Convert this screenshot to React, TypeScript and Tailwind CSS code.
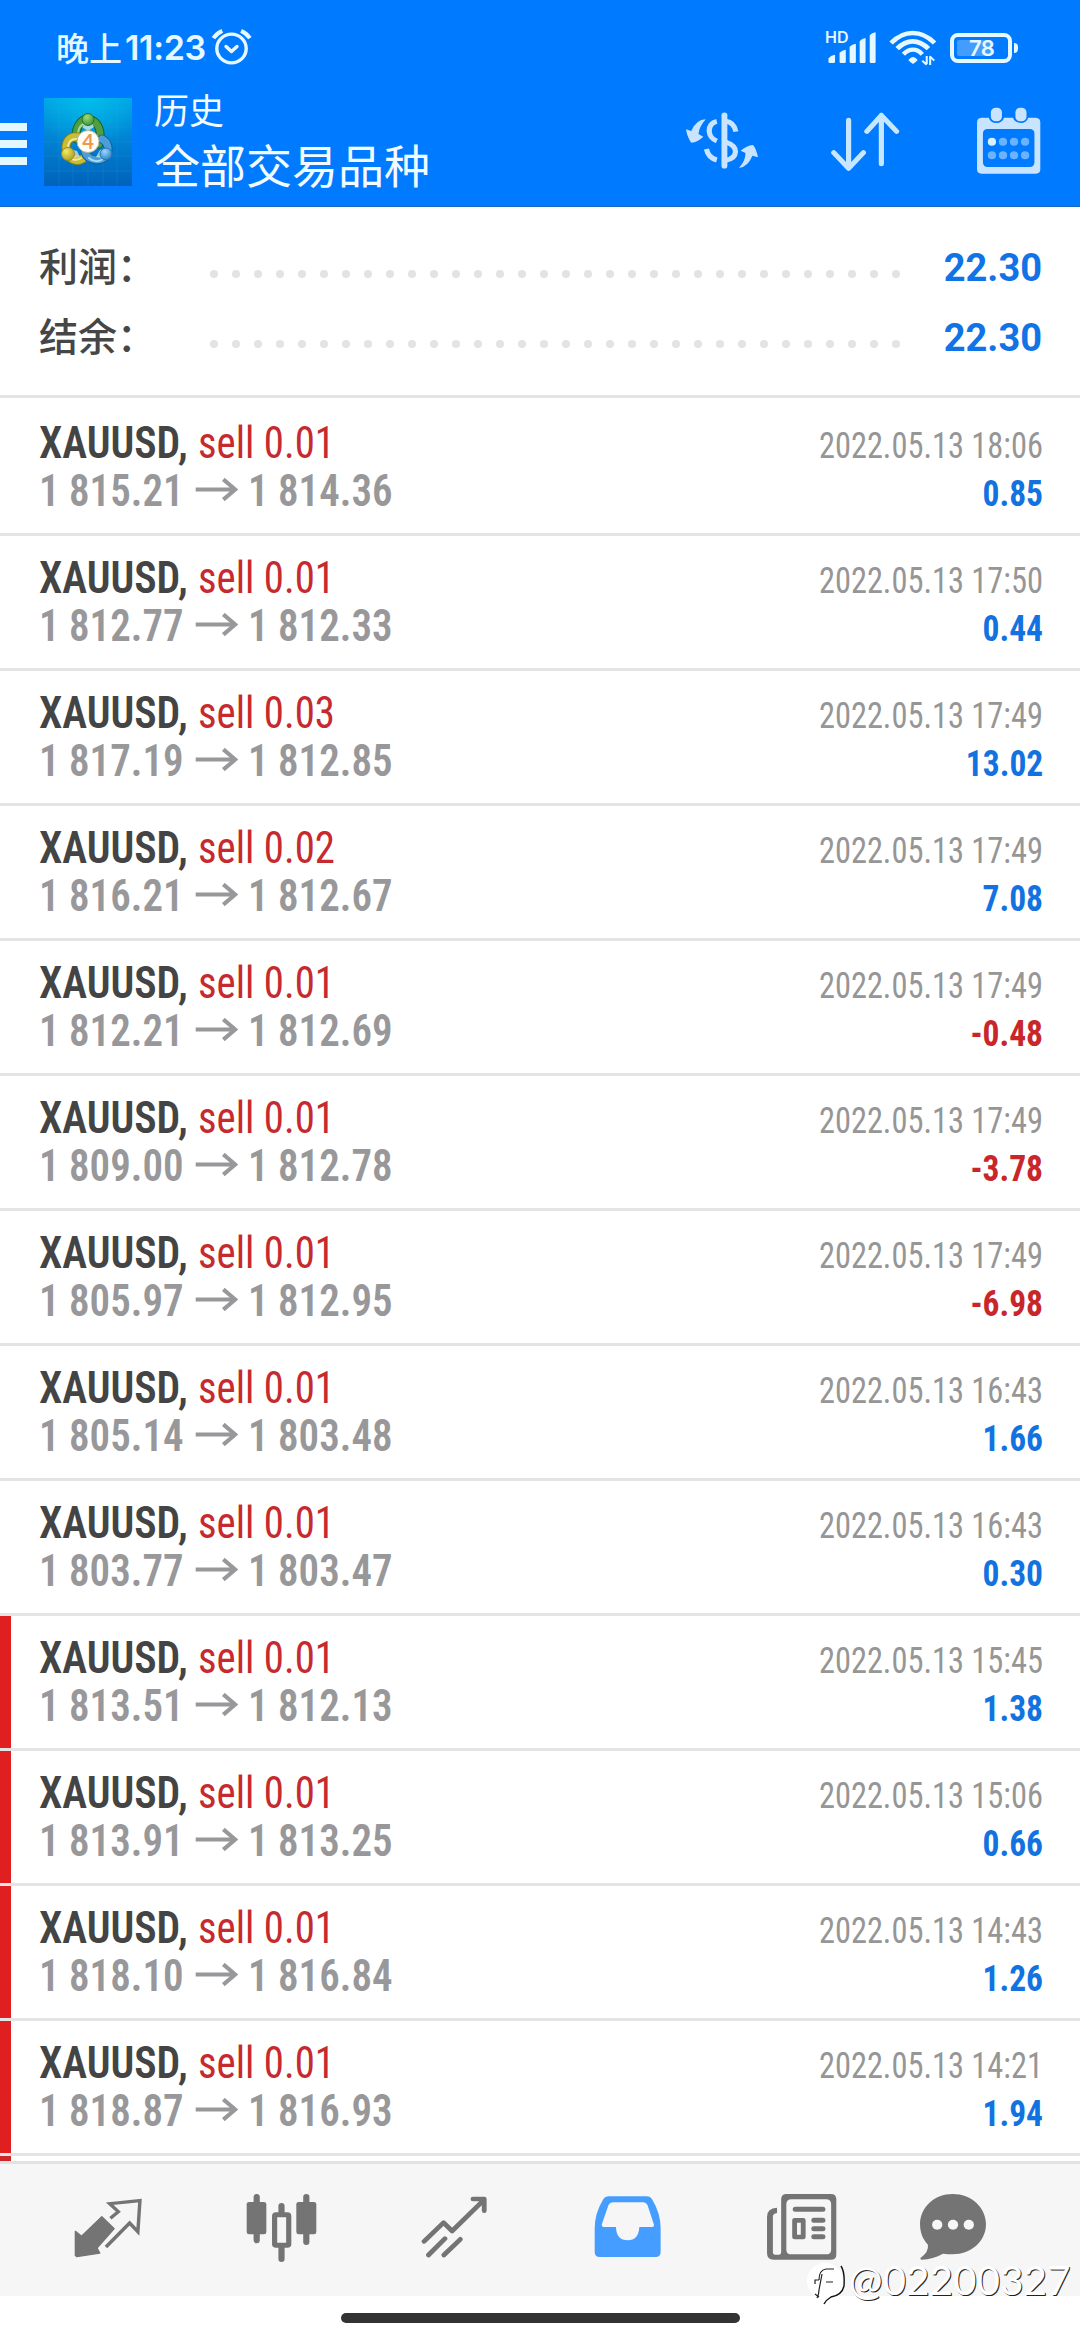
import type { ReactNode } from "react";

type Trade = {
  lot: string;
  from: string;
  to: string;
  time: string;
  profit: string;
  marked?: boolean;
};

const trades: Trade[] = [
  { lot: "0.01", from: "1 815.21", to: "1 814.36", time: "18:06", profit: "0.85" },
  { lot: "0.01", from: "1 812.77", to: "1 812.33", time: "17:50", profit: "0.44" },
  { lot: "0.03", from: "1 817.19", to: "1 812.85", time: "17:49", profit: "13.02" },
  { lot: "0.02", from: "1 816.21", to: "1 812.67", time: "17:49", profit: "7.08" },
  { lot: "0.01", from: "1 812.21", to: "1 812.69", time: "17:49", profit: "-0.48" },
  { lot: "0.01", from: "1 809.00", to: "1 812.78", time: "17:49", profit: "-3.78" },
  { lot: "0.01", from: "1 805.97", to: "1 812.95", time: "17:49", profit: "-6.98" },
  { lot: "0.01", from: "1 805.14", to: "1 803.48", time: "16:43", profit: "1.66" },
  { lot: "0.01", from: "1 803.77", to: "1 803.47", time: "16:43", profit: "0.30" },
  { lot: "0.01", from: "1 813.51", to: "1 812.13", time: "15:45", profit: "1.38", marked: true },
  { lot: "0.01", from: "1 813.91", to: "1 813.25", time: "15:06", profit: "0.66", marked: true },
  { lot: "0.01", from: "1 818.10", to: "1 816.84", time: "14:43", profit: "1.26", marked: true },
  { lot: "0.01", from: "1 818.87", to: "1 816.93", time: "14:21", profit: "1.94", marked: true },
];

function Glyph({ box, className, children }: { box: string; className: string; children: ReactNode }) {
  return (
    <svg viewBox={box} preserveAspectRatio="none" className={className} fill="none" strokeLinecap="round" strokeLinejoin="round">
      {children}
    </svg>
  );
}

function StatusBar() {
  return (
    <div className="flex h-[95px] items-center pl-[56px] text-[#e6f8ff]">
      <span className="w-[69px] font-['Noto_Sans_CJK_SC',sans-serif] text-[33px] font-medium leading-[93px]">晚上</span>
      <span className="w-[86px] font-[Inter,sans-serif] text-[34px] font-semibold leading-[95px] tracking-[-0.3px]">11:23</span>
      <Glyph box="612 84 120 114" className="h-[38px] w-[41px] translate-y-[-0.5px]">
        <circle cx="672" cy="144" r="43" stroke="currentColor" strokeWidth="10" />
        <path d="M656 138L672 153L688 138" stroke="currentColor" strokeWidth="10" />
        <path d="M619 113Q629 98 645 91M726 113Q716 98 700 91" stroke="currentColor" strokeWidth="12" strokeLinecap="butt" />
      </Glyph>
      <div className="relative ml-auto mr-[12px] h-[35px] w-[52px]">
        <span className="absolute left-0 top-0 font-[Inter,sans-serif] text-[16px] font-semibold leading-[15px]">HD</span>
        <Glyph box="825 90 150 105" className="h-[35px] w-[52px]">
          <path
            fill="currentColor"
            d="M835 175Q843 165 854 164V185Q854 189 850 189H839Q835 189 835 185ZM867 158Q874 150 885 149V185Q885 189 881 189H871Q867 189 867 185ZM896 140Q903 132 914 131V185Q914 189 910 189H900Q896 189 896 185ZM925 124Q931 115 942 114V185Q942 189 938 189H929Q925 189 925 185ZM954 106Q960 98 971 97V185Q971 189 967 189H958Q954 189 954 185Z"
          />
        </Glyph>
      </div>
      <Glyph box="1007 90 140 108" className="mr-[13px] h-[36px] w-[48px]">
        <path d="M1013 129Q1042 99 1076 99Q1111 99 1140 129M1031 146Q1052 124 1076 124Q1100 124 1122 146" stroke="currentColor" strokeWidth="14" strokeLinecap="butt" />
        <path d="M1049 163Q1062 149 1077 149Q1092 149 1104 163" stroke="currentColor" strokeWidth="13" strokeLinecap="butt" />
        <path fill="currentColor" d="M1064 179Q1077 163 1090 179Q1091 182 1077 192Q1063 182 1064 179Z" />
        <path d="M1117 168V192M1104 182L1117 194M1127 195V170L1139 182" stroke="currentColor" strokeWidth="6" strokeLinecap="butt" />
      </Glyph>
      <div className="mr-[62px] flex items-center">
        <div className="relative flex h-[30px] w-[62px] items-center rounded-[8px] border-4 border-current px-[3px]">
          <div className="h-[16px] w-[35px] rounded-[2px] bg-[#449cff]" />
          <span className="absolute left-[15px] top-0 font-[Inter,sans-serif] text-[22px] font-semibold leading-[22px] tracking-[-0.5px]">78</span>
        </div>
        <div className="ml-[2px] h-[10px] w-[4px] rounded-r-full bg-current" />
      </div>
    </div>
  );
}

function AppIcon() {
  return (
    <svg viewBox="0 0 88 88" className="h-[88px] w-[88px]">
      <defs>
        <linearGradient id="sky" x1="0" y1="0" x2="0" y2="1">
          <stop offset="0" stopColor="#00a4e2" />
          <stop offset="0.45" stopColor="#0084d4" />
          <stop offset="1" stopColor="#0062ba" />
        </linearGradient>
        <radialGradient id="glow" cx="0.5" cy="0" r="0.6">
          <stop offset="0" stopColor="#00c8f0" stopOpacity="0.7" />
          <stop offset="1" stopColor="#00c8f0" stopOpacity="0" />
        </radialGradient>
        <radialGradient id="green" cx="0.4" cy="0.3" r="0.8">
          <stop offset="0" stopColor="#9fdc72" />
          <stop offset="1" stopColor="#2f8a35" />
        </radialGradient>
        <radialGradient id="gold" cx="0.35" cy="0.3" r="0.8">
          <stop offset="0" stopColor="#f5ea6a" />
          <stop offset="1" stopColor="#a99a1c" />
        </radialGradient>
        <radialGradient id="blue" cx="0.4" cy="0.3" r="0.8">
          <stop offset="0" stopColor="#9ad8fa" />
          <stop offset="1" stopColor="#1f78bf" />
        </radialGradient>
      </defs>
      <rect width="88" height="88" fill="url(#sky)" />
      <rect width="88" height="88" fill="url(#glow)" />
      <path d="M15 0V88M29 0V88M44 0V88M59 0V88M73 0V88M0 14H88M0 29H88M0 44H88M0 58H88M0 73H88" stroke="#35a7e6" strokeOpacity="0.18" />
      <g fill="none" strokeLinecap="round">
        <path d="M32 41C31 25 41 20 45 21C55 24 58 34 55 46" stroke="#17632c" strokeWidth="9" />
        <path d="M32 41C31 25 41 20 45 21C55 24 58 34 55 46" stroke="#4f9f42" strokeWidth="7" />
        <path d="M34 35C35 27 40 25 43 25" stroke="#a4d890" strokeWidth="2" />
        <path d="M35 39C24 37 20 46 23 55C27 64 36 64 41 59" stroke="#8b8417" strokeWidth="9" />
        <path d="M35 39C24 37 20 46 23 55C27 64 36 64 41 59" stroke="#c9bd38" strokeWidth="7" />
        <path d="M24 48C25 42 29 41 32 41M28 61Q33 63 37 60" stroke="#f0e99a" strokeWidth="2" />
        <path d="M41 54C44 63 57 64 62 58C66 51 64 44 58 41" stroke="#145d99" strokeWidth="9" />
        <path d="M41 54C44 63 57 64 62 58C66 51 64 44 58 41" stroke="#4a9fd8" strokeWidth="7" />
        <path d="M45 60C49 64 55 64 59 61" stroke="#a8dcf8" strokeWidth="2" />
      </g>
      <path d="M38 29L44 33L50 29L48 25H41ZM26 51L33 53L36 59L28 60ZM62 51L56 52L52 59L60 60Z" fill="#e8f4e4" fillOpacity="0.7" />
      <circle cx="44" cy="21.5" r="6" fill="url(#green)" stroke="#226f2d" />
      <circle cx="24" cy="56" r="6.5" fill="url(#gold)" stroke="#9a8d1c" />
      <circle cx="62" cy="56" r="6" fill="url(#blue)" stroke="#2475b4" />
      <circle cx="44" cy="43.5" r="11" fill="#fffdf8" stroke="#b9b49c" />
      <text x="44" y="50.5" textAnchor="middle" fontFamily="Lato, sans-serif" fontSize="20" fontWeight="700" fill="#f0984a">
        4
      </text>
    </svg>
  );
}

function Toolbar() {
  return (
    <div className="flex h-[112px] items-start">
      <div className="mt-[28px] flex w-[27px] flex-col gap-[9px]">
        <div className="h-[8px] bg-[#e3f7ff]" />
        <div className="h-[8px] bg-[#e3f7ff]" />
        <div className="h-[8px] bg-[#e3f7ff]" />
      </div>
      <div className="ml-[17px] mt-[3px]">
        <AppIcon />
      </div>
      <div className="ml-[22px] mt-[-8px] flex w-[500px] flex-col font-['Noto_Sans_CJK_SC',sans-serif] text-[#f2fbff]">
        <span className="text-[35px] leading-[44px]">历史</span>
        <span className="mt-[4px] text-[46px] leading-[56px]">全部交易品种</span>
      </div>
      <Glyph box="422 335 214 171" className="ml-[31px] mt-[17px] h-[57px] w-[74px]">
        <g fill="#c8e4ff">
          <path d="M482 357Q454 358 440 392L425 387Q428 410 440 427Q459 425 475 409L461 401Q463 379 482 357Z" />
          <path d="M578 503Q604 499 617 466L633 471Q629 448 619 434Q600 436 583 451L597 458Q597 481 578 503Z" />
        </g>
        <g stroke="#c8e4ff" strokeLinecap="butt">
          <path d="M536 345V496" strokeWidth="17" strokeLinecap="round" />
          <path d="M514 363Q492 368 492 392Q493 413 514 422M484 446Q489 472 514 479" strokeWidth="15" />
          <path d="M540 363Q564 366 569 394M540 425Q568 435 568 454Q567 475 540 480" strokeWidth="15" />
        </g>
      </Glyph>
      <Glyph box="845 335 200 180" className="ml-[72px] mt-[17px] h-[60px] w-[69px]">
        <path d="M896 360V503M853 457L896 504L939 457M991 490V345M949 393L991 345L1035 393" stroke="#c6e7ff" strokeWidth="15" />
      </Glyph>
      <Glyph box="1266 321 188 201" className="ml-[76px] mt-[12px] h-[67px] w-[65px]">
        <path
          fill="#c8e4ff"
          fillRule="evenodd"
          d="M1282 353H1303Q1307 368 1325 369Q1343 368 1347 353H1373Q1378 368 1396 369Q1413 368 1417 353H1439Q1452 354 1452 367V508Q1452 521 1439 521H1282Q1269 521 1269 508V367Q1269 354 1282 353ZM1300 387Q1286 387 1286 401V487Q1286 501 1300 501H1421Q1435 501 1435 487V401Q1435 387 1421 387Z"
        />
        <rect x="1309" y="323" width="32" height="41" rx="14" fill="#c8e4ff" />
        <rect x="1380" y="323" width="32" height="41" rx="14" fill="#c8e4ff" />
        <circle cx="1312" cy="425" r="12" fill="#d9f0ff" />
        <g fill="#6ab4ff">
          <circle cx="1344" cy="425" r="12" />
          <circle cx="1376" cy="425" r="12" />
          <circle cx="1408" cy="425" r="12" />
          <circle cx="1312" cy="466" r="12" />
          <circle cx="1344" cy="466" r="12" />
          <circle cx="1376" cy="466" r="12" />
          <circle cx="1408" cy="466" r="12" />
        </g>
      </Glyph>
    </div>
  );
}

function SummaryRow({ label, value }: { label: string; value: string }) {
  return (
    <div className="flex h-[70px] items-center">
      <span className="w-[171px] pb-[8px] font-['Noto_Sans_CJK_SC',sans-serif] text-[39px] font-medium leading-[62px] text-[#464646]">{label}</span>
      <div className="mt-[12px] flex gap-[14px]">
        {Array.from({ length: 32 }, (_, i) => (
          <div key={i} className="h-[8px] w-[8px] rounded-full bg-[#e3e3e3]" />
        ))}
      </div>
      <span className="ml-auto font-[Roboto,sans-serif] text-[38px] font-bold leading-[70px] text-[#1273e6]">{value}</span>
    </div>
  );
}

function TradeRow({ trade }: { trade: Trade }) {
  const loss = trade.profit.startsWith("-");
  return (
    <div className="relative h-[135px] shrink-0 border-b-[3px] border-[#e4e4e4] pl-[39px] pr-[37px] pt-[18px] font-[Roboto,sans-serif] [font-stretch:75%]">
      {trade.marked && <div className="absolute left-0 top-0 h-[132px] w-[11px] bg-[#e02020]" />}
      <div className="flex h-[48px] items-baseline leading-[48px]">
        <span className="w-[159px] origin-left scale-x-[0.95] whitespace-nowrap text-[44px] font-semibold text-[#444]">XAUUSD,</span>
        <span className="origin-left scale-x-[0.927] whitespace-nowrap text-[44px] text-[#c62a2e]">sell {trade.lot}</span>
        <span className="ml-auto origin-right scale-x-[0.9] whitespace-nowrap text-[36px] text-[#969696]">2022.05.13 {trade.time}</span>
      </div>
      <div className="flex h-[48px] items-baseline leading-[48px] text-[#98989b]">
        <span className="w-[156px] origin-left scale-x-[0.93] whitespace-nowrap text-[44px] font-semibold">{trade.from}</span>
        <Glyph box="566 802 126 68" className="mr-[10px] h-[23px] w-[43px] translate-y-[-5px]">
          <path d="M568 836H682M649 806L684 836L649 866" stroke="currentColor" strokeWidth="12" strokeLinecap="butt" strokeLinejoin="miter" />
        </Glyph>
        <span className="origin-left scale-x-[0.93] whitespace-nowrap text-[44px] font-semibold">{trade.to}</span>
        <span className={`ml-auto origin-right scale-x-[0.93] whitespace-nowrap text-[36px] font-bold ${loss ? "text-[#c8262b]" : "text-[#1273e0]"}`}>{trade.profit}</span>
      </div>
    </div>
  );
}

function TabBar() {
  return (
    <div className="flex h-[132px] shrink-0 items-start bg-[#f6f6f6] pt-[28px] text-[#747474]">
      <Glyph box="216 216 198 216" className="ml-[74px] h-[72px] w-[68px]">
        <path fill="currentColor" stroke="currentColor" strokeWidth="4" d="M297 290L333 326L283 384L291 399L224 410L220 406V334L238 349Z" />
        <path d="M322 295L345 275L320 251L408 242L402 335L378 309L309 381" stroke="currentColor" strokeWidth="10" strokeLinecap="butt" strokeLinejoin="miter" />
      </Glyph>
      <Glyph box="713 216 206 216" className="ml-[104px] h-[72px] w-[71px]">
        <g fill="currentColor">
          <rect x="715" y="246" width="57" height="97" rx="7" />
          <rect x="859" y="246" width="58" height="97" rx="7" />
        </g>
        <path d="M744 231V361M888 231V366M816 258V282M816 382V417" stroke="currentColor" strokeWidth="18" />
        <rect x="796" y="284" width="41" height="92" rx="4" stroke="currentColor" strokeWidth="15" fill="#f6f6f6" />
      </Glyph>
      <Glyph box="1222 216 196 216" className="ml-[104px] h-[72px] w-[67px]">
        <path d="M1231 364L1288 308L1313 333L1404 242M1374 237H1407V272M1244 405L1292 356M1289 405L1337 358" stroke="currentColor" strokeWidth="14" />
      </Glyph>
      <Glyph box="156 216 198 216" className="ml-[106px] h-[72px] w-[68px]">
        <path
          fill="#449dff"
          fillRule="evenodd"
          d="M200 229H309Q320 229 325 238Q350 280 350 325V396Q350 411 335 411H173Q158 411 158 396V325Q158 280 183 238Q188 229 200 229ZM212 247Q202 247 198 256L179 312Q177 320 185 321H220Q221 361 254 361Q286 361 288 321H325Q333 320 330 312L312 256Q308 247 298 247Z"
        />
      </Glyph>
      <Glyph box="654 216 206 216" className="ml-[104px] h-[72px] w-[71px]">
        <path
          fill="currentColor"
          fillRule="evenodd"
          d="M714 222H842Q858 222 858 238V404Q858 419 842 419H676Q657 419 657 400V290Q657 264 686 263V279Q674 281 674 290V396Q674 404 681 404H691Q699 404 698 392V238Q698 222 714 222ZM728 238Q713 238 713 253V389Q713 403 728 403H828Q843 403 843 389V253Q843 238 828 238Z"
        />
        <path d="M739 268H819M793 301H819M793 326H819M793 350H819" stroke="currentColor" strokeWidth="15" />
        <rect x="737" y="301" width="25" height="50" stroke="currentColor" strokeWidth="14" />
      </Glyph>
      <Glyph box="1100 216 198 216" className="ml-[82px] h-[72px] w-[68px]">
        <path fill="currentColor" d="M1198 222C1252 222 1295 262 1295 313C1295 364 1252 403 1198 403Q1182 403 1170 401C1150 412 1130 418 1108 419Q1102 418 1105 413Q1129 395 1126 374C1110 357 1103 336 1103 313C1103 262 1145 222 1198 222Z" />
        <g fill="#f6f6f6">
          <circle cx="1153" cy="314" r="15" />
          <circle cx="1199" cy="314" r="15" />
          <circle cx="1245" cy="314" r="15" />
        </g>
      </Glyph>
    </div>
  );
}

function Watermark() {
  return (
    <div className="absolute left-[806px] top-[2256px] flex items-start">
      <svg viewBox="0 0 46 50" className="h-[50px] w-[46px]" fill="none">
        <circle cx="19" cy="25" r="18" fill="#fff" />
        <path d="M35 10Q39 16 38 30Q36 39 25 41Q20 44 18 48" stroke="#111" strokeWidth="1.4" />
        <path d="M13 24Q13 14 20 13H28M13 24H9V28M20 26H27M13 34Q13 38 11 42M9 38L13 41M16 18L13 34" stroke="#222" strokeWidth="1.2" />
      </svg>
      <span className="ml-[-3px] font-[Lato,sans-serif] text-[40px] leading-[48px] tracking-[0.3px] text-white [text-shadow:1px_1px_0_#222]">@02200327</span>
    </div>
  );
}

export default function App() {
  return (
    <div className="relative flex h-[2340px] w-[1080px] flex-col overflow-hidden bg-white">
      <header className="h-[207px] shrink-0 border-b border-[#1668c4] bg-[#007aff]">
        <StatusBar />
        <Toolbar />
      </header>
      <section className="mb-[3px] h-[191px] shrink-0 border-b-[3px] border-[#e4e4e4] pl-[39px] pr-[38px] pt-[26px]">
        <SummaryRow label="利润：" value="22.30" />
        <SummaryRow label="结余：" value="22.30" />
      </section>
      <main className="flex h-[1760px] shrink-0 flex-col overflow-hidden">
        {trades.map((t, i) => (
          <TradeRow key={i} trade={t} />
        ))}
        <div className="h-[5px] w-[11px] shrink-0 bg-[#cc262a]" />
      </main>
      <div className="h-[3px] shrink-0 bg-[#e2e2e2]" />
      <TabBar />
      <div className="flex h-[44px] justify-center pt-[17px]">
        <div className="h-[10px] w-[399px] rounded-full bg-[#333]" />
      </div>
      <Watermark />
    </div>
  );
}
